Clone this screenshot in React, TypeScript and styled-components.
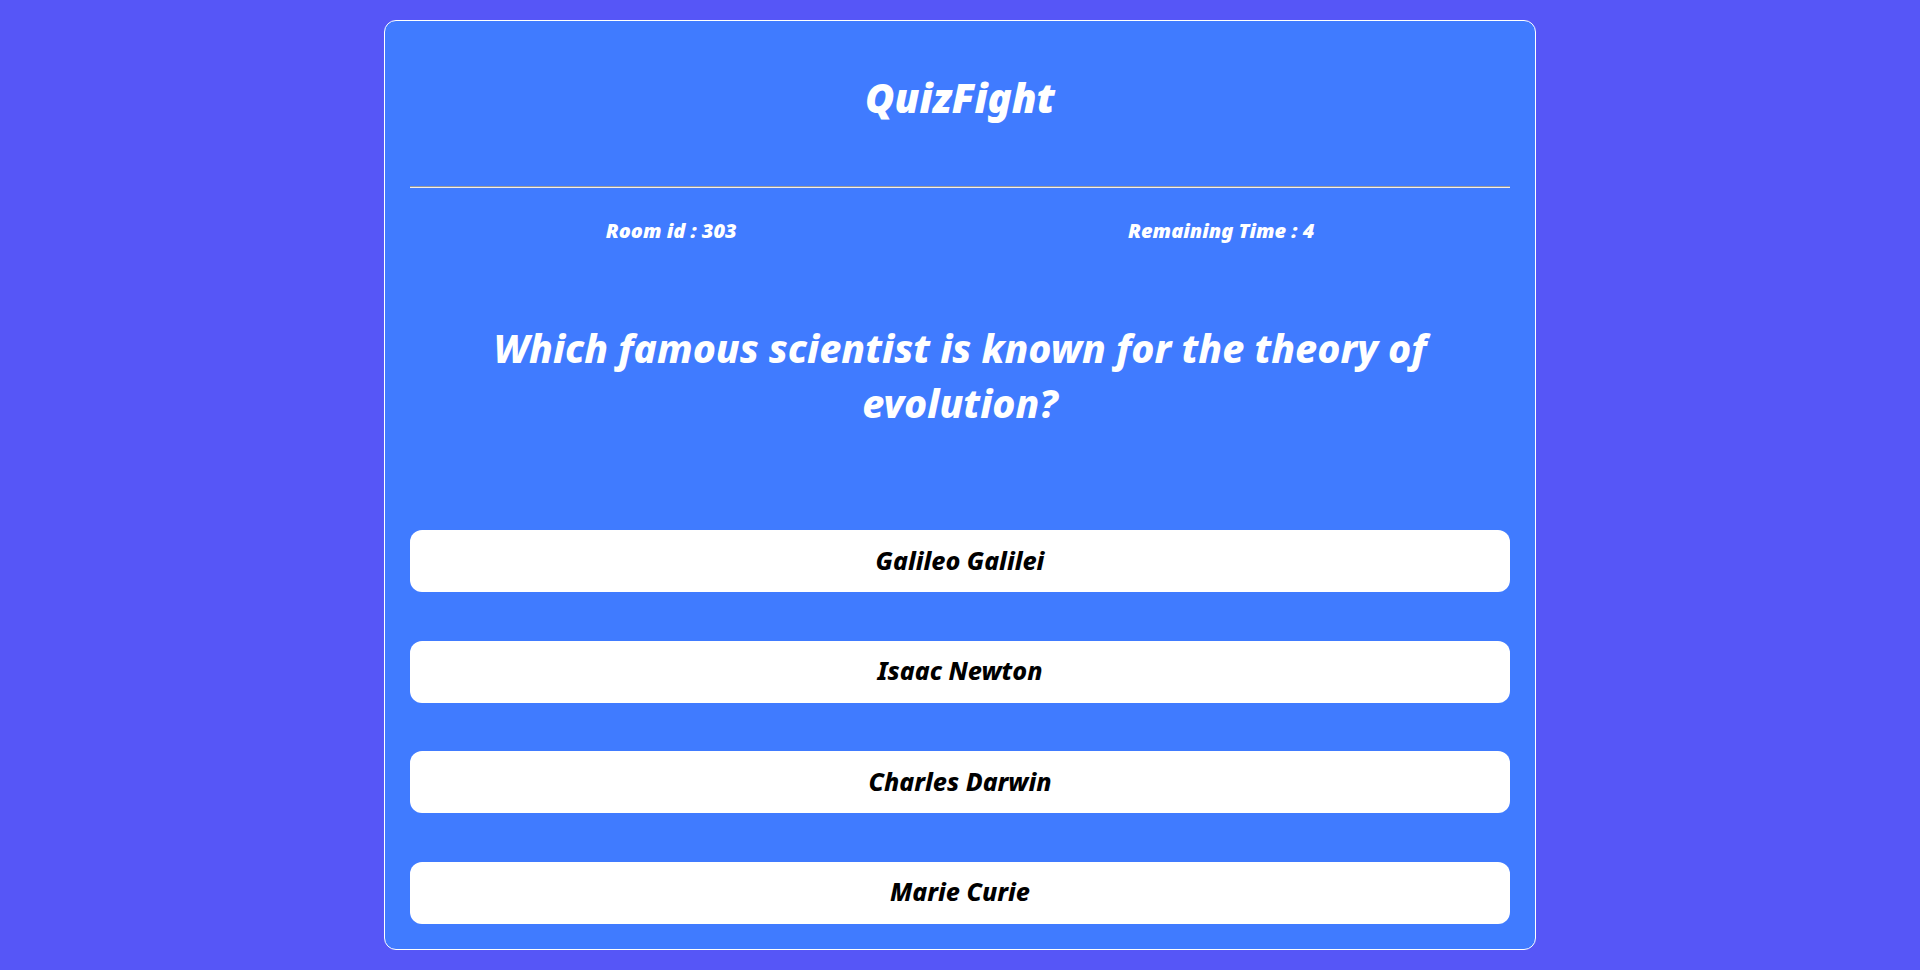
import React from "react";
import styled, { createGlobalStyle } from "styled-components";

const GlobalStyle = createGlobalStyle`
  *, *::before, *::after {
    box-sizing: border-box;
  }
  body {
    margin: 0;
    background: #5656f7;
    font-family: "Noto Sans", "Open Sans", sans-serif;
    font-style: italic;
    font-weight: 900;
  }
`;

const Page = styled.div`
  display: flex;
  justify-content: center;
  min-height: 100vh;
  padding: 20px 0;
`;

const Card = styled.main`
  display: flex;
  flex-direction: column;
  width: 60%;
  padding: 25px;
  border: 1px solid #fff;
  border-radius: 12px;
  background: #407bff;
  color: #fff;
`;

const Title = styled.h1`
  margin: 24px 0 61px;
  font-size: 40px;
  font-weight: 900;
  line-height: 55px;
  text-align: center;
`;

const Divider = styled.hr`
  width: 100%;
  margin: 0;
  border: 0;
  border-top: 1px solid #9a9a9a;
  border-bottom: 1px solid #eee;
`;

const StatusBar = styled.div`
  display: flex;
  justify-content: space-around;
  margin: 29px 0 75px;
`;

const Status = styled.span`
  font-size: 20px;
  line-height: 28px;
`;

const Question = styled.h2`
  margin: 0 0 100px;
  font-size: 39px;
  font-weight: 850;
  line-height: 55px;
  text-align: center;
`;

const Options = styled.div`
  display: flex;
  flex: 1;
  flex-direction: column;
  justify-content: space-between;
  gap: 24px;
`;

const Option = styled.button`
  width: 100%;
  height: 62px;
  padding: 0 0 3px;
  border: 0;
  border-radius: 12px;
  background: #fff;
  color: #000;
  font: inherit;
  font-size: 25px;
  font-weight: 800;
  cursor: pointer;
`;

const answers = ["Galileo Galilei", "Isaac Newton", "Charles Darwin", "Marie Curie"];

export default function App() {
  return (
    <Page>
      <GlobalStyle />
      <Card>
        <Title>QuizFight</Title>
        <Divider />
        <StatusBar>
          <Status>Room id : 303</Status>
          <Status>Remaining Time : 4</Status>
        </StatusBar>
        <Question>Which famous scientist is known for the theory of evolution?</Question>
        <Options>
          {answers.map((answer) => (
            <Option key={answer} type="button">
              {answer}
            </Option>
          ))}
        </Options>
      </Card>
    </Page>
  );
}
